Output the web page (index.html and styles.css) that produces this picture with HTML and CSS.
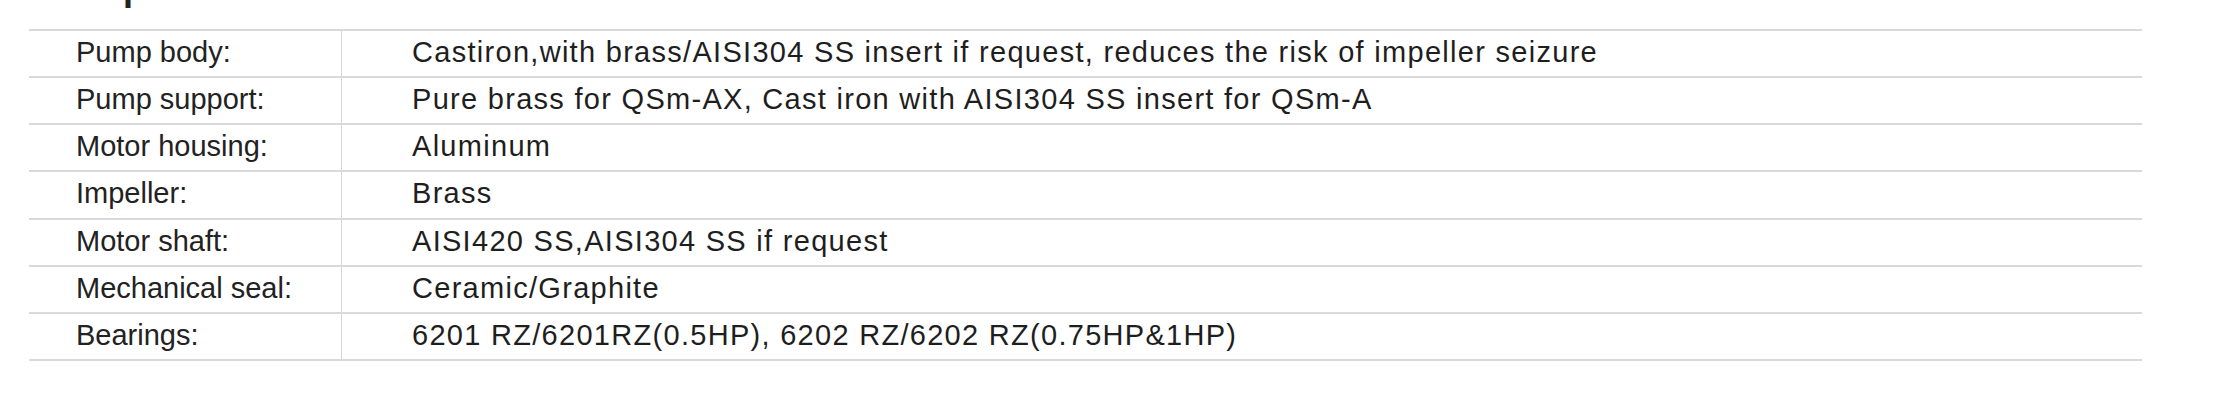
FILE: index.html
```html
<!DOCTYPE html>
<html lang="en">
<head>
<meta charset="utf-8">
<title>Pump Parts Materials</title>
<link rel="stylesheet" href="styles.css">
</head>
<body>
<div class="page">
  <h2 class="title">Pump Parts Materials</h2>
  <div class="spec">
    <div class="row"><div class="label">Pump body:</div><div class="value">Castiron,with brass/AISI304 SS insert if request, reduces the risk of impeller seizure</div></div>
    <div class="row"><div class="label">Pump support:</div><div class="value">Pure brass for QSm-AX, Cast iron with AISI304 SS insert for QSm-A</div></div>
    <div class="row"><div class="label">Motor housing:</div><div class="value">Aluminum</div></div>
    <div class="row"><div class="label">Impeller:</div><div class="value">Brass</div></div>
    <div class="row"><div class="label">Motor shaft:</div><div class="value">AISI420 SS,AISI304 SS if request</div></div>
    <div class="row"><div class="label">Mechanical seal:</div><div class="value">Ceramic/Graphite</div></div>
    <div class="row"><div class="label">Bearings:</div><div class="value">6201 RZ/6201RZ(0.5HP), 6202 RZ/6202 RZ(0.75HP&amp;1HP)</div></div>
  </div>
</div>
</body>
</html>
```

FILE: styles.css
```css
html, body {
  margin: 0;
  padding: 0;
  background: #ffffff;
}

body {
  width: 2232px;
  height: 412px;
  overflow: hidden;
  font-family: "Liberation Sans", Arial, sans-serif;
  color: #1c1c1c;
}

.page {
  padding-left: 29px;
}

.title {
  margin: -30px 0 0 16px;
  height: 36px;
  font-size: 36px;
  line-height: 36px;
  font-weight: bold;
  color: #222222;
}

.spec {
  margin-top: 22.5px;
  width: 2113px;
  border-top: 2px solid #d9d9d9;
}

.row {
  display: flex;
  height: 47.25px;
  box-sizing: border-box;
  border-bottom: 2px solid #d9d9d9;
  font-size: 29px;
  line-height: 42.5px;
  white-space: nowrap;
}

.label {
  box-sizing: border-box;
  width: 313px;
  flex: none;
  padding-left: 47px;
  color: #222222;
  border-right: 1px solid #d6d6d6;
}

.value {
  padding-left: 70px;
  letter-spacing: 1.29px;
  color: #1e1e1e;
}
```
